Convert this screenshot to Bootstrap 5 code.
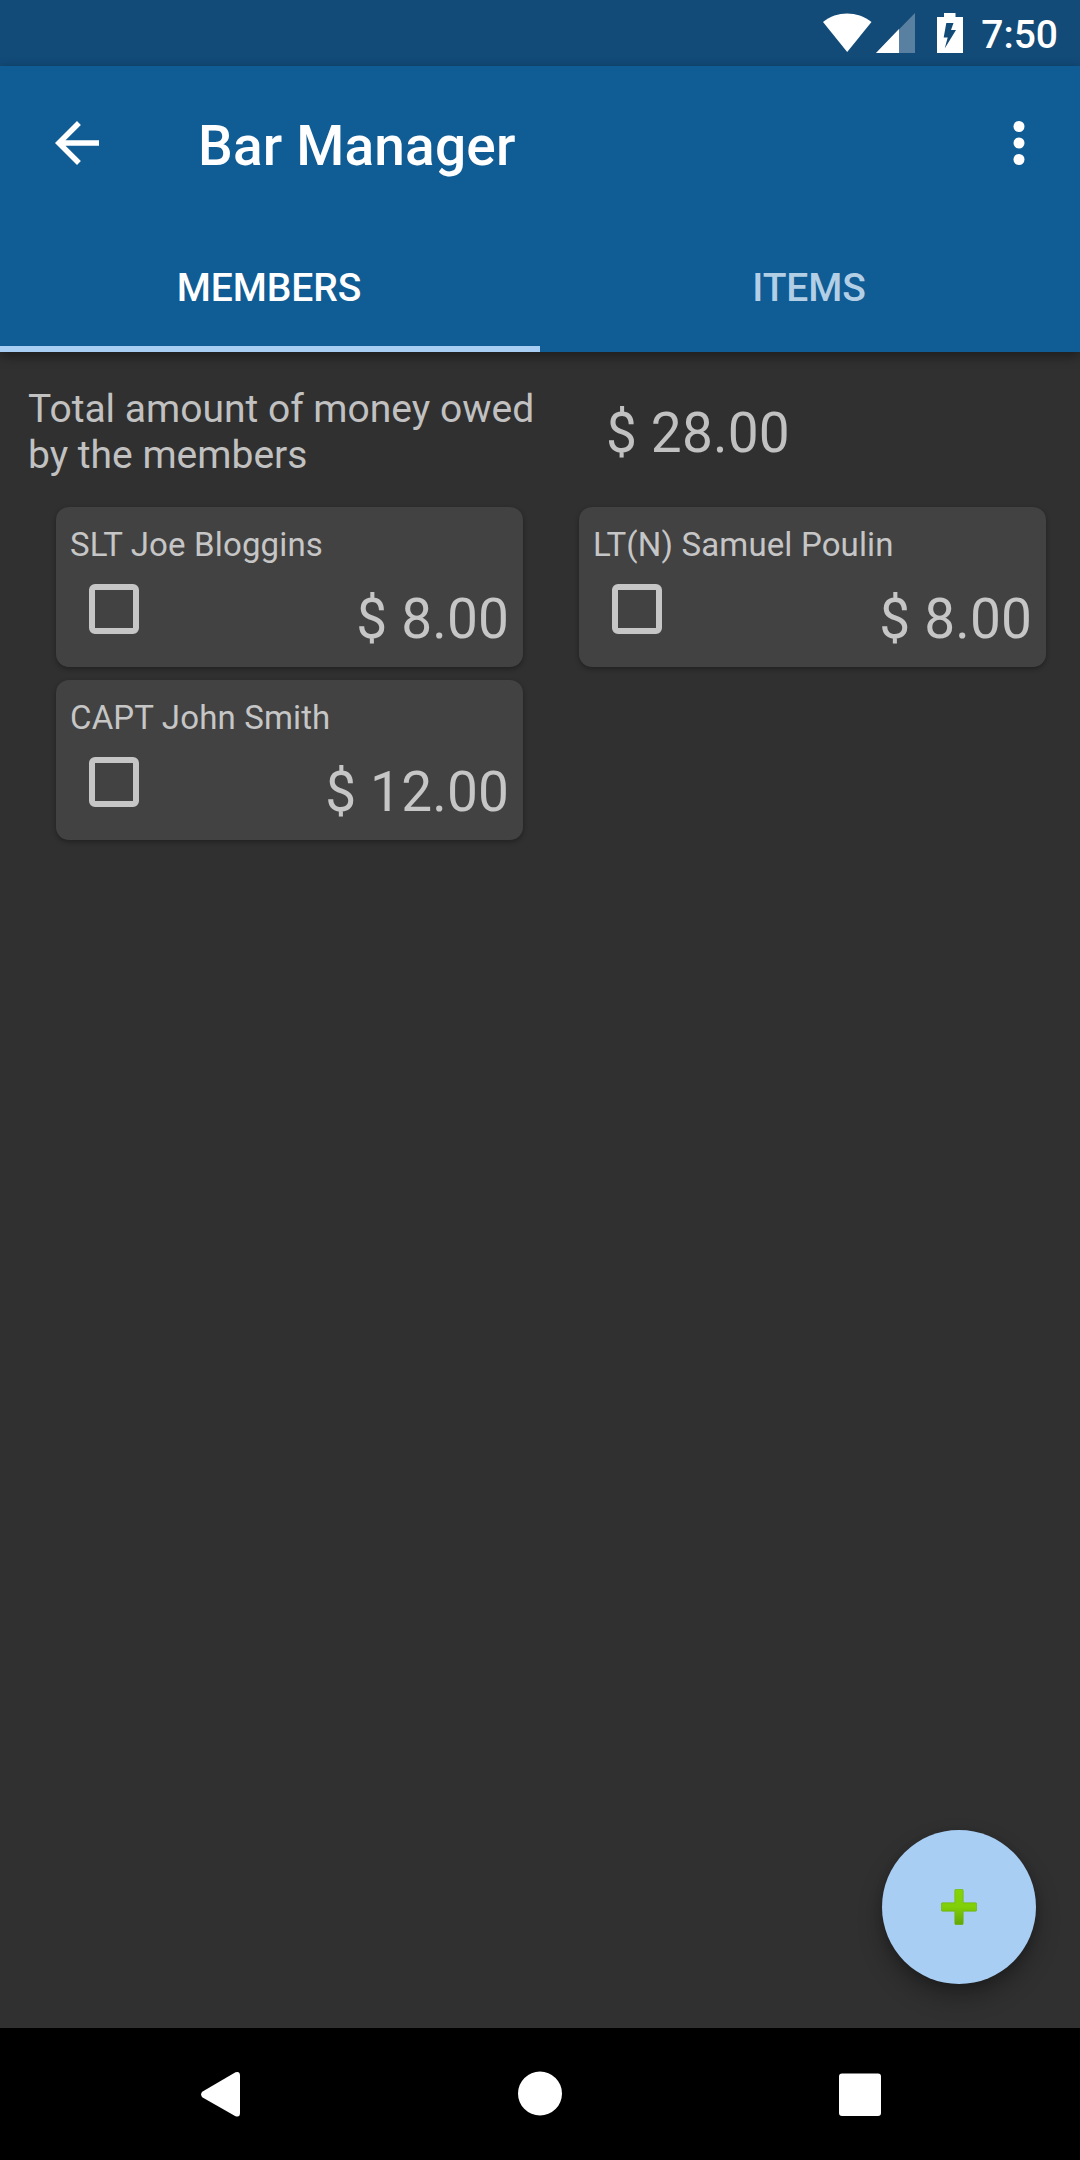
<!DOCTYPE html>
<html lang="en">
<head>
<meta charset="utf-8">
<meta name="viewport" content="width=device-width, initial-scale=1">
<title>Bar Manager</title>
<link href="https://cdn.jsdelivr.net/npm/bootstrap@5.3.0/dist/css/bootstrap.min.css" rel="stylesheet">
<style>
  body { font-family: Roboto, "Liberation Sans", sans-serif; background: #303030; color: #c1c1c1; height: 2160px; width: 1080px; }
  svg { display: block; flex: none; }
  .status-bar { height: 66px; background: #124a78; padding: 0 22px 0 0; color: #fff; }
  .clock { font-size: 39px; font-weight: 500; line-height: 46px; margin: 3px 0 0 17px; }
  .app-header { background: #105c94; color: #fff; box-shadow: 0 4px 11px rgba(0,0,0,.4); z-index: 1; }
  .app-toolbar { height: 154px; padding: 0 28px 0 44px; }
  .app-title { font-size: 55px; font-weight: 500; line-height: 64px; padding-top: 6px; margin-left: 88px; letter-spacing: .18px; }
  .app-tabs .nav-link { height: 132px; padding: 10px 2px 0 0; border-radius: 0; font-size: 39px; font-weight: 500; letter-spacing: -.1px; color: #b3cfe6; border-bottom: 6px solid transparent; }
  .app-tabs .nav-link.active { color: #fff; border-bottom-color: #a8cef3; }
  .summary { height: 155px; padding-left: 28px; }
  .summary-label { width: 578px; padding-top: 34px; font-size: 39px; line-height: 46px; }
  .amount { font-size: 55px; line-height: 64px; letter-spacing: .15px; }
  .summary .amount { padding-top: 49px; }
  .member-list { padding: 0 34px 0 56px; }
  .member-list .row { --bs-gutter-x: 56px; --bs-gutter-y: 13px; }
  .member { height: 160px; border: 0; border-radius: 13px; background: #424242; color: #c6c6c6; box-shadow: 0 2px 5px rgba(0,0,0,.32); padding: 18px 14px 0 14px; }
  .member-name { font-size: 33px; line-height: 40px; letter-spacing: .15px; }
  .member .amount { margin-top: 3px; }
  .member-foot { padding-top: 19px; }
  .member .form-check-input { width: 50px; height: 50px; margin: 0 0 0 19px; border: 6px solid #c6c6c6; border-radius: 6px; background-color: transparent; }
  .fab { right: 44px; bottom: 44px; width: 154px; height: 154px; padding: 0; background: #a8cef3; box-shadow: 0 13px 25px rgba(0,0,0,.3), 0 3px 8px rgba(0,0,0,.15); }
  .system-nav { height: 132px; background: #000; padding-left: 201px; padding-right: 199px; }
</style>
</head>
<body class="d-flex flex-column overflow-hidden">
  <div class="status-bar d-flex align-items-center justify-content-end">
    <svg width="142" height="66" viewBox="0 0 142 66">
      <path d="M1 22C15 10.700 35 10.700 49.500 22L25.200 52Z" fill="#fff"/>
      <path d="M93 13V53H54Z" fill="#fff" fill-opacity=".3"/>
      <path d="M77 29V53H54Z" fill="#fff"/>
      <path fill-rule="evenodd" fill="#fff" d="M122 17V13h11.500v4H141v36h-26V17ZM124.300 23L121.700 37.500h4L122.700 48.500L134 30h-5L131.500 23Z"/>
    </svg>
    <div class="clock">7:50</div>
  </div>

  <header class="app-header position-relative">
    <div class="app-toolbar d-flex align-items-center">
      <svg width="66" height="66" viewBox="0 0 24 24" fill="#fff" role="img" aria-label="Back"><path d="M20 11H7.830l5.590-5.590L12 4l-8 8 8 8 1.410-1.410L7.830 13H20z"/></svg>
      <h1 class="app-title mb-0">Bar Manager</h1>
      <svg class="ms-auto" width="66" height="66" viewBox="0 0 24 24" fill="#fff" role="img" aria-label="More options"><circle cx="12" cy="6" r="2"/><circle cx="12" cy="12" r="2"/><circle cx="12" cy="18" r="2"/></svg>
    </div>
    <nav class="app-tabs nav nav-fill">
      <a class="nav-link active w-50 d-flex align-items-center justify-content-center" href="#">MEMBERS</a>
      <a class="nav-link w-50 d-flex align-items-center justify-content-center" href="#">ITEMS</a>
    </nav>
  </header>

  <main class="flex-grow-1 position-relative">
    <section class="summary d-flex">
      <div class="summary-label">Total amount of money owed<br>by the members</div>
      <div class="amount">$ 28.00</div>
    </section>
    <section class="member-list">
      <div class="row row-cols-2 mt-0">
        <div class="col mt-0">
          <div class="card member">
            <div class="member-name">SLT Joe Bloggins</div>
            <div class="member-foot d-flex justify-content-between align-items-start"><input class="form-check-input" type="checkbox" aria-label="SLT Joe Bloggins"><span class="amount">$ 8.00</span></div>
          </div>
        </div>
        <div class="col mt-0">
          <div class="card member">
            <div class="member-name">LT(N) Samuel Poulin</div>
            <div class="member-foot d-flex justify-content-between align-items-start"><input class="form-check-input" type="checkbox" aria-label="LT(N) Samuel Poulin"><span class="amount">$ 8.00</span></div>
          </div>
        </div>
        <div class="col">
          <div class="card member">
            <div class="member-name">CAPT John Smith</div>
            <div class="member-foot d-flex justify-content-between align-items-start"><input class="form-check-input" type="checkbox" aria-label="CAPT John Smith"><span class="amount">$ 12.00</span></div>
          </div>
        </div>
      </div>
    </section>
    <button class="fab btn rounded-circle border-0 position-absolute d-flex align-items-center justify-content-center" type="button" aria-label="Add">
      <svg width="36" height="36" viewBox="0 0 36 36">
        <defs><linearGradient id="leaf" x1="0" y1="0" x2="0" y2="1"><stop offset="0" stop-color="#84d406"/><stop offset=".5" stop-color="#80cf08"/><stop offset="1" stop-color="#62a606"/></linearGradient></defs>
        <path fill="url(#leaf)" stroke="#6cb00a" stroke-width=".6" d="M15 .3h6q1.200 0 1.200 1.200V13.800H34.500q1.200 0 1.200 1.200v6q0 1.200-1.200 1.200H22.200V34.500q0 1.200-1.200 1.200h-6q-1.200 0-1.200-1.200V22.200H1.500Q.3 22.200 .3 21v-6q0-1.200 1.200-1.200H13.800V1.500Q13.800 .3 15 .3Z"/>
      </svg>
    </button>
  </main>

  <footer class="system-nav d-flex align-items-center justify-content-between">
    <svg width="40" height="46" viewBox="0 0 40 46"><path fill="#fff" d="M1.200 20.800L34.500 1.300Q39 -.300 39 4.500V42Q39 46.800 34.500 45.200L1.200 26.200Q-1 23.500 1.200 20.800Z"/></svg>
    <svg width="45" height="46" viewBox="0 0 45 46"><circle cx="22" cy="22.500" r="22" fill="#fff"/></svg>
    <svg width="42" height="43" viewBox="0 0 42 43"><rect y=".5" width="42" height="42.500" rx="3" fill="#fff"/></svg>
  </footer>
<script src="https://cdn.jsdelivr.net/npm/bootstrap@5.3.0/dist/js/bootstrap.bundle.min.js"></script>
</body>
</html>
